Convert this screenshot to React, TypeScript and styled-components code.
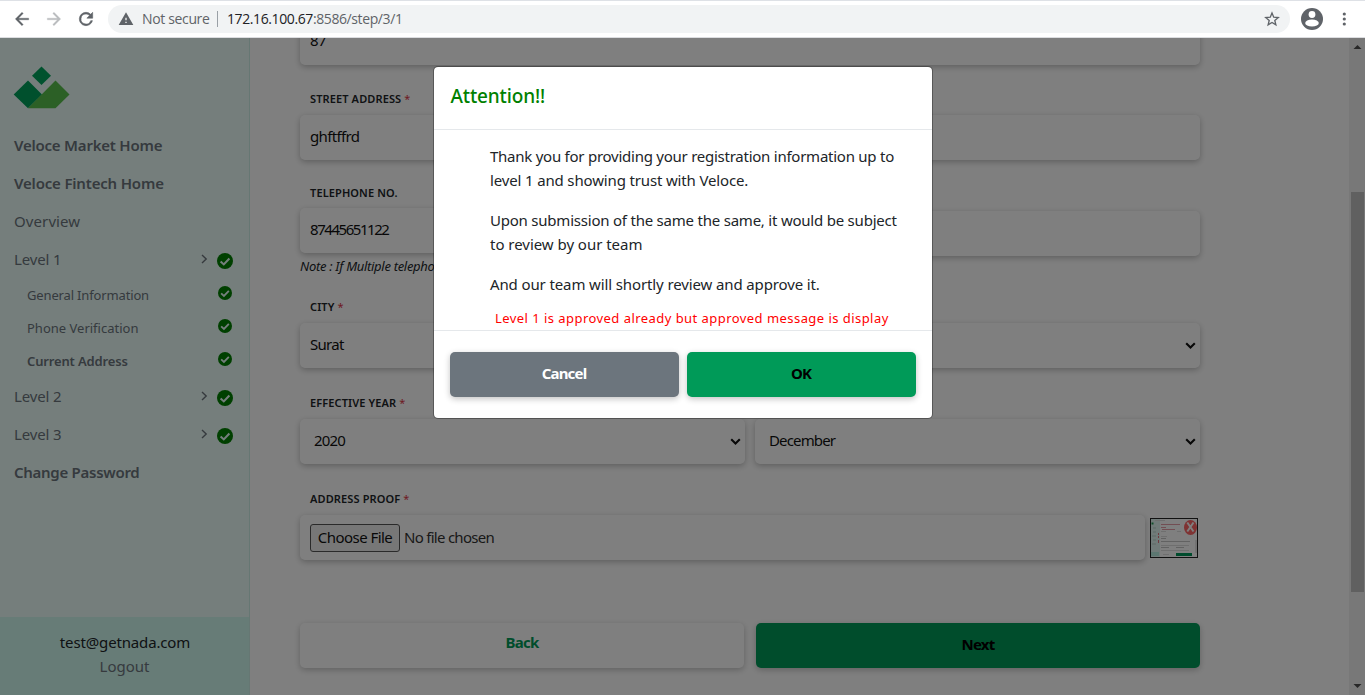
import React from "react";
import styled, { createGlobalStyle } from "styled-components";

const GlobalStyle = createGlobalStyle`
  * { box-sizing: border-box; }
  body { margin: 0; overflow: hidden; }
  p, h5 { margin: 0; }
`;

const Screen = styled.div`
  width: 1365px;
  height: 695px;
  display: flex;
  flex-direction: column;
  overflow: hidden;
  font-family: "Noto Sans", sans-serif;
  font-size: 15px;
  color: #212529;
  white-space: nowrap;
`;

/* Browser toolbar */
const Toolbar = styled.header`
  flex: none;
  height: 38px;
  display: flex;
  align-items: center;
  padding: 0 10px 0 12px;
  background: #fff;
  border-top: 1px solid #dee1e6;
  border-bottom: 1px solid #dcdde0;
`;

const NavIcon = styled.svg<{ $gap: number }>`
  flex: none;
  margin-right: ${(p) => p.$gap}px;
`;

const AddressBar = styled.div`
  flex: 1;
  height: 28px;
  margin-right: 10px;
  padding: 0 10px;
  border-radius: 14px;
  background: #f1f3f4;
  display: flex;
  align-items: center;
  font-family: "Open Sans", sans-serif;
  font-size: 14px;
  color: #5f6368;
`;

const NotSecure = styled.span`
  margin-left: 8px;
  width: 67px;
  padding-bottom: 1px;
  letter-spacing: -0.35px;
`;

const Divider = styled.span`
  width: 1px;
  height: 16px;
  margin: 0 9px 0 8px;
  background: #9aa0a6;
`;

const Url = styled.span`
  flex: 1;
  padding-bottom: 1px;
  letter-spacing: -0.4px;
`;

const Host = styled.span`
  color: #202124;
`;

/* Page */
const Page = styled.div`
  position: relative;
  flex: 1;
  min-height: 0;
  display: flex;
  background: #fff;
`;

const Sidebar = styled.aside`
  flex: none;
  width: 250px;
  display: flex;
  flex-direction: column;
  background: #ebfdf9;
  border-right: 1px solid #cdeee7;
  color: #6c757d;
`;

const Logo = styled.svg`
  flex: none;
  margin: 28px 0 18px 13px;
`;

const Menu = styled.nav`
  flex: 1;
`;

const MenuItem = styled.div<{ $bold?: boolean; $ls?: number }>`
  height: 38px;
  padding: 0 16px 0 14px;
  display: flex;
  align-items: center;
  font-weight: ${(p) => (p.$bold ? 600 : 400)};
  letter-spacing: ${(p) => p.$ls ?? 0}px;

  span {
    flex: 1;
    padding-bottom: 2px;
  }
`;

const SubItem = styled(MenuItem)`
  height: 33px;
  padding-left: 27px;
  padding-right: 17px;
  font-size: 13px;

  svg { margin-bottom: 6px; }
`;

const Chevron = styled.svg`
  margin: 0 9px 2px 0;
`;

const LevelCheck = styled.div`
  height: 16px;
  margin-top: 2px;

  svg { display: block; }
`;

const Account = styled.div`
  height: 78px;
  padding-top: 13px;
  background: #cef8ee;
  text-align: center;
  line-height: 24px;
`;

const Email = styled.div`
  padding-left: 1px;
  color: #212529;
  letter-spacing: -0.15px;
`;

const Main = styled.main`
  flex: 1;
  padding: 0 149px 0 50px;
  overflow: hidden;
`;

const Label = styled.label<{ $top?: number }>`
  display: block;
  margin-top: ${(p) => p.$top ?? 29}px;
  padding-left: 10px;
  height: 20px;
  line-height: 20px;
  font-size: 11px;
  font-weight: 600;
  letter-spacing: 0.12px;
  text-transform: uppercase;

  i {
    font-style: normal;
    font-weight: 400;
    color: #dc3545;
  }
`;

const Row = styled.div<{ $gap?: number }>`
  display: flex;
  gap: ${(p) => p.$gap ?? 10}px;
`;

const Column = styled.div`
  flex: 1;
`;

const Control = styled.div<{ $top?: number; $left?: number }>`
  flex: 1;
  height: 45px;
  margin-top: ${(p) => p.$top ?? 6}px;
  padding: 0 4px 0 ${(p) => p.$left ?? 10}px;
  display: flex;
  align-items: center;
  justify-content: space-between;
  border-radius: 5px;
  background: #fff;
  box-shadow: 0 2px 6px rgba(0, 0, 0, 0.26);
  color: #111;
  letter-spacing: -0.3px;
`;

const Value = styled.span<{ $ls?: number; $lift?: number }>`
  padding-bottom: ${(p) => p.$lift ?? 3}px;
  letter-spacing: ${(p) => p.$ls ?? -0.7}px;
`;

const Note = styled.p`
  height: 24px;
  margin-top: 2px;
  line-height: 22px;
  font-size: 13px;
  font-style: italic;
  letter-spacing: -0.3px;
`;

const FileButton = styled.span`
  height: 28px;
  width: 90px;
  margin: 1px 4px 0 0;
  border: 1px solid #555;
  border-radius: 3px;
  background: #efefef;
  text-align: center;
  line-height: 24px;
  letter-spacing: -0.55px;
`;

const FileName = styled.span`
  flex: 1;
  padding-bottom: 1px;
  color: #333;
  letter-spacing: -0.72px;
`;

const Thumb = styled.div`
  width: 50px;
  margin: 9px 0 0 -5px;

  svg { display: block; }
`;

const Button = styled.button<{ $bg: string; $fg: string; $lift?: number }>`
  flex: 1;
  height: 45px;
  padding: 0 0 ${(p) => p.$lift ?? 3}px;
  border: 0;
  border-radius: 5px;
  background: ${(p) => p.$bg};
  color: ${(p) => p.$fg};
  font: 700 15px "Noto Sans", sans-serif;
  letter-spacing: -0.8px;
  box-shadow: 0 2px 6px rgba(0, 0, 0, 0.24);
`;

const Actions = styled(Row)`
  margin-top: 63px;
`;

const Scrollbar = styled.div`
  flex: none;
  width: 16px;
  display: flex;
  flex-direction: column;
  align-items: center;
  background: #f1f1f1;
`;

const ScrollThumb = styled.div`
  width: 13px;
  height: 400px;
  margin: 142px 0 auto 1px;
  background: #c1c1c1;
`;

/* Modal */
const Backdrop = styled.div`
  position: absolute;
  inset: 0;
  display: flex;
  justify-content: center;
  align-items: flex-start;
  padding-top: 28px;
  background: rgba(0, 0, 0, 0.5);
`;

const Dialog = styled.section`
  width: 500px;
  height: 353px;
  border: 1px solid rgba(0, 0, 0, 0.3);
  border-radius: 5px;
  background: #fff;
  background-clip: padding-box;
`;

const DialogTitle = styled.h5`
  height: 63px;
  padding: 14px 17px;
  border-bottom: 1px solid #e5e8eb;
  color: #008000;
  font-size: 19px;
  font-weight: 500;
  line-height: 30px;
  letter-spacing: -0.15px;
`;

const DialogBody = styled.div`
  height: 200px;
  padding: 14px 0 0 56.5px;
  line-height: 24px;

  p { margin-bottom: 16px; }
`;

const Line = styled.span<{ $ls: number }>`
  display: block;
  letter-spacing: ${(p) => p.$ls}px;
`;

const Remark = styled.div`
  margin-top: -6px;
  padding-left: 5px;
  color: #ff0000;
  font-size: 13px;
  letter-spacing: 0.45px;
`;

const DialogFooter = styled(Row)`
  padding: 21px 16px 0;
  border-top: 1px solid #e5e8eb;
`;

const Check = ({ size }: { size: number }) => (
  <svg width={size} height={size} viewBox="0 0 16 16">
    <circle cx="8" cy="8" r="8" fill="#008000" />
    <path d="M3.6 8.4 6.8 11.4 12.4 5.6" fill="none" stroke="#ebfdf9" strokeWidth="2.1" />
  </svg>
);

const Caret = () => (
  <svg width="11" height="8" viewBox="0 0 11 8">
    <path d="M1.2 1.2 5.5 5.500 9.800 1.200" fill="none" stroke="#111" strokeWidth="2.1" />
  </svg>
);

const Level = ({ children }: { children: string }) => (
  <MenuItem $ls={-0.15}>
    <span>{children}</span>
    <Chevron width="7" height="10" viewBox="0 0 7 10">
      <path d="M1 1 5.2 5 1 9" fill="none" stroke="#6c757d" strokeWidth="1.4" />
    </Chevron>
    <LevelCheck><Check size={16} /></LevelCheck>
  </MenuItem>
);

const Proof = () => (
  <svg width="48" height="40" viewBox="0 0 48 40">
    <rect x="0.5" y="0.5" width="47" height="39" fill="#fff" stroke="#222" />
    <rect x="1" y="1" width="9" height="38" fill="#e1f7f2" />
    <rect x="1" y="34" width="8" height="4" fill="#b9eee2" />
    <path d="M1.5 5.5h2" stroke="#259c58" strokeWidth="2" />
    <path d="M3 10h3M3 14h3M2 18h4M3 22h3M2 26h4" stroke="#b8d2cc" />
    <path d="M8.5 15v2M8.5 18v2M8.5 22v3" stroke="#df7480" />
    <path d="M5 2.5h10M11 13.5h5M27 13.5h4M11 18.5h6M11 27.5h28M11 32.5h28M13 36.5h6" stroke="#dedede" />
    <path d="M11 6.5h19M11 9.5h5M12 11.5h13" stroke="#e59da7" />
    <path d="M11 20.5h5M11 23.5h29M11 29.5h8M26 29.5h8" stroke="#c5c5c5" />
    <rect x="26" y="35" width="16" height="3" fill="#00985a" />
    <path d="M46 22v13" stroke="#ccc" />
    <ellipse cx="40.5" cy="9.5" rx="6.5" ry="7.5" fill="#f66" />
    <path d="m37.3 4.5 6.2 9M43.5 4.5l-6.2 9" stroke="#fff" strokeWidth="2" />
  </svg>
);

export default function App() {
  return (
    <Screen>
      <GlobalStyle />
      <Toolbar>
        <NavIcon $gap={12} width="20" height="20" viewBox="0 0 24 24">
          <path d="M20 11H7.83l5.59-5.59L12 4l-8 8 8 8 1.41-1.41L7.83 13H20z" fill="#5f6368" stroke="#5f6368" strokeWidth="0.4" />
        </NavIcon>
        <NavIcon $gap={12} width="20" height="20" viewBox="0 0 24 24">
          <path d="m12 4-1.41 1.41L16.17 11H4v2h12.17l-5.58 5.59L12 20l8-8z" fill="#babcbe" stroke="#babcbe" strokeWidth="0.4" />
        </NavIcon>
        <NavIcon $gap={12} width="20" height="20" viewBox="0 0 24 24">
          <path d="M17.65 6.35A7.96 7.96 0 0 0 12 4a8 8 0 1 0 7.73 10h-2.08A6 6 0 1 1 12 6c1.66 0 3.14.69 4.22 1.78L13 11h7V4z" fill="#5f6368" stroke="#5f6368" strokeWidth="0.7" />
        </NavIcon>
        <AddressBar>
          <svg width="16" height="16" viewBox="0 0 24 24">
            <path d="M1 21h22L12 2zm12-3h-2v-2h2zm0-4h-2v-4h2z" fill="#5f6368" />
          </svg>
          <NotSecure>Not secure</NotSecure>
          <Divider />
          <Url>
            <Host>172.16.100.67</Host>:8586/step/3/1
          </Url>
          <svg width="16" height="16" viewBox="0 0 24 24">
            <path d="m12 3 2.6 6.2 6.8.6-5.2 4.4 1.6 6.6L12 17.2l-5.8 3.6 1.6-6.6-5.2-4.4 6.8-.6z" fill="none" stroke="#5f6368" strokeWidth="2" />
          </svg>
        </AddressBar>
        <NavIcon $gap={18} width="24" height="24" viewBox="0 0 24 24">
          <circle cx="12" cy="12" r="11" fill="#5f6368" />
          <circle cx="12" cy="7.5" r="3.4" fill="#fff" />
          <ellipse cx="12" cy="16" rx="6.8" ry="3.6" fill="#fff" />
        </NavIcon>
        <NavIcon $gap={9} width="4" height="14" viewBox="0 0 4 14">
          <circle cx="2.3" cy="2" r="1.6" fill="#5f6368" />
          <circle cx="2.3" cy="7" r="1.6" fill="#5f6368" />
          <circle cx="2.3" cy="12" r="1.6" fill="#5f6368" />
        </NavIcon>
      </Toolbar>

      <Page>
        <Sidebar>
          <Logo width="57" height="43" viewBox="0 0 57 43">
            <path d="m28.5.5 9.5 9.3-9.5 9.2L19 9.8z" fill="#00a45c" />
            <path d="m15 14.5 14 14-14 13.7-14.3-13.7z" fill="#00a05a" />
            <path d="m42.5 14.5 14 14-14 13.7H15z" fill="#58c04c" />
          </Logo>
          <Menu>
            <MenuItem $bold $ls={-0.22}><span>Veloce Market Home</span></MenuItem>
            <MenuItem $bold $ls={-0.18}><span>Veloce Fintech Home</span></MenuItem>
            <MenuItem $ls={0.1}><span>Overview</span></MenuItem>
            <Level>Level 1</Level>
            <SubItem $ls={-0.15}><span>General Information</span><Check size={14} /></SubItem>
            <SubItem><span>Phone Verification</span><Check size={14} /></SubItem>
            <SubItem $bold $ls={-0.15}><span>Current Address</span><Check size={14} /></SubItem>
            <Level>Level 2</Level>
            <Level>Level 3</Level>
            <MenuItem $bold $ls={-0.28}><span>Change Password</span></MenuItem>
          </Menu>
          <Account>
            <Email>test@getnada.com</Email>
            Logout
          </Account>
        </Sidebar>

        <Main>
          <Control $top={-18}><Value $lift={5}>87</Value></Control>
          <Label $top={24}>Street Address <i>*</i></Label>
          <Control><Value $ls={-0.65}>ghftffrd</Value></Control>
          <Row>
            <Column>
              <Label $top={23}>Telephone No.</Label>
              <Control $top={5}><Value $ls={-1.45}>87445651122</Value></Control>
              <Note>Note : If Multiple telephone numbers, separate by comma</Note>
            </Column>
            <Column>
              <Control $top={51} />
            </Column>
          </Row>
          <Label $top={18}>City <i>*</i></Label>
          <Control><Value>Surat</Value><Caret /></Control>
          <Label $top={25}>Effective Year <i>*</i></Label>
          <Row>
            <Control $left={14}><Value $ls={-0.8}>2020</Value><Caret /></Control>
            <Control $left={14}><Value $ls={-0.85}>December</Value><Caret /></Control>
          </Row>
          <Label $top={25}>Address Proof <i>*</i></Label>
          <Row>
            <Control>
              <FileButton>Choose File</FileButton>
              <FileName>No file chosen</FileName>
            </Control>
            <Thumb><Proof /></Thumb>
          </Row>
          <Actions $gap={12}>
            <Button $bg="#fff" $fg="#009a58" $lift={7}>Back</Button>
            <Button $bg="#009a58" $fg="#000">Next</Button>
          </Actions>
        </Main>

        <Scrollbar>
          <svg width="16" height="12" viewBox="0 0 16 12">
            <path d="M4.5 11h8L8.5 7z" fill="#505050" />
          </svg>
          <ScrollThumb />
          <svg width="16" height="14" viewBox="0 0 16 14">
            <path d="M4.5 3h8l-4 4z" fill="#505050" />
          </svg>
        </Scrollbar>

        <Backdrop>
          <Dialog>
            <DialogTitle>Attention!!</DialogTitle>
            <DialogBody>
              <p>
                <Line $ls={-0.25}>Thank you for providing your registration information up to</Line>
                <Line $ls={-0.15}>level 1 and showing trust with Veloce.</Line>
              </p>
              <p>
                <Line $ls={-0.22}>Upon submission of the same the same, it would be subject</Line>
                <Line $ls={-0.03}>to review by our team</Line>
              </p>
              <p>
                <Line $ls={-0.12}>And our team will shortly review and approve it.</Line>
              </p>
              <Remark>Level 1 is approved already but approved message is display</Remark>
            </DialogBody>
            <DialogFooter $gap={8}>
              <Button $bg="#6c757d" $fg="#fff">Cancel</Button>
              <Button $bg="#009a58" $fg="#000">OK</Button>
            </DialogFooter>
          </Dialog>
        </Backdrop>
      </Page>
    </Screen>
  );
}
